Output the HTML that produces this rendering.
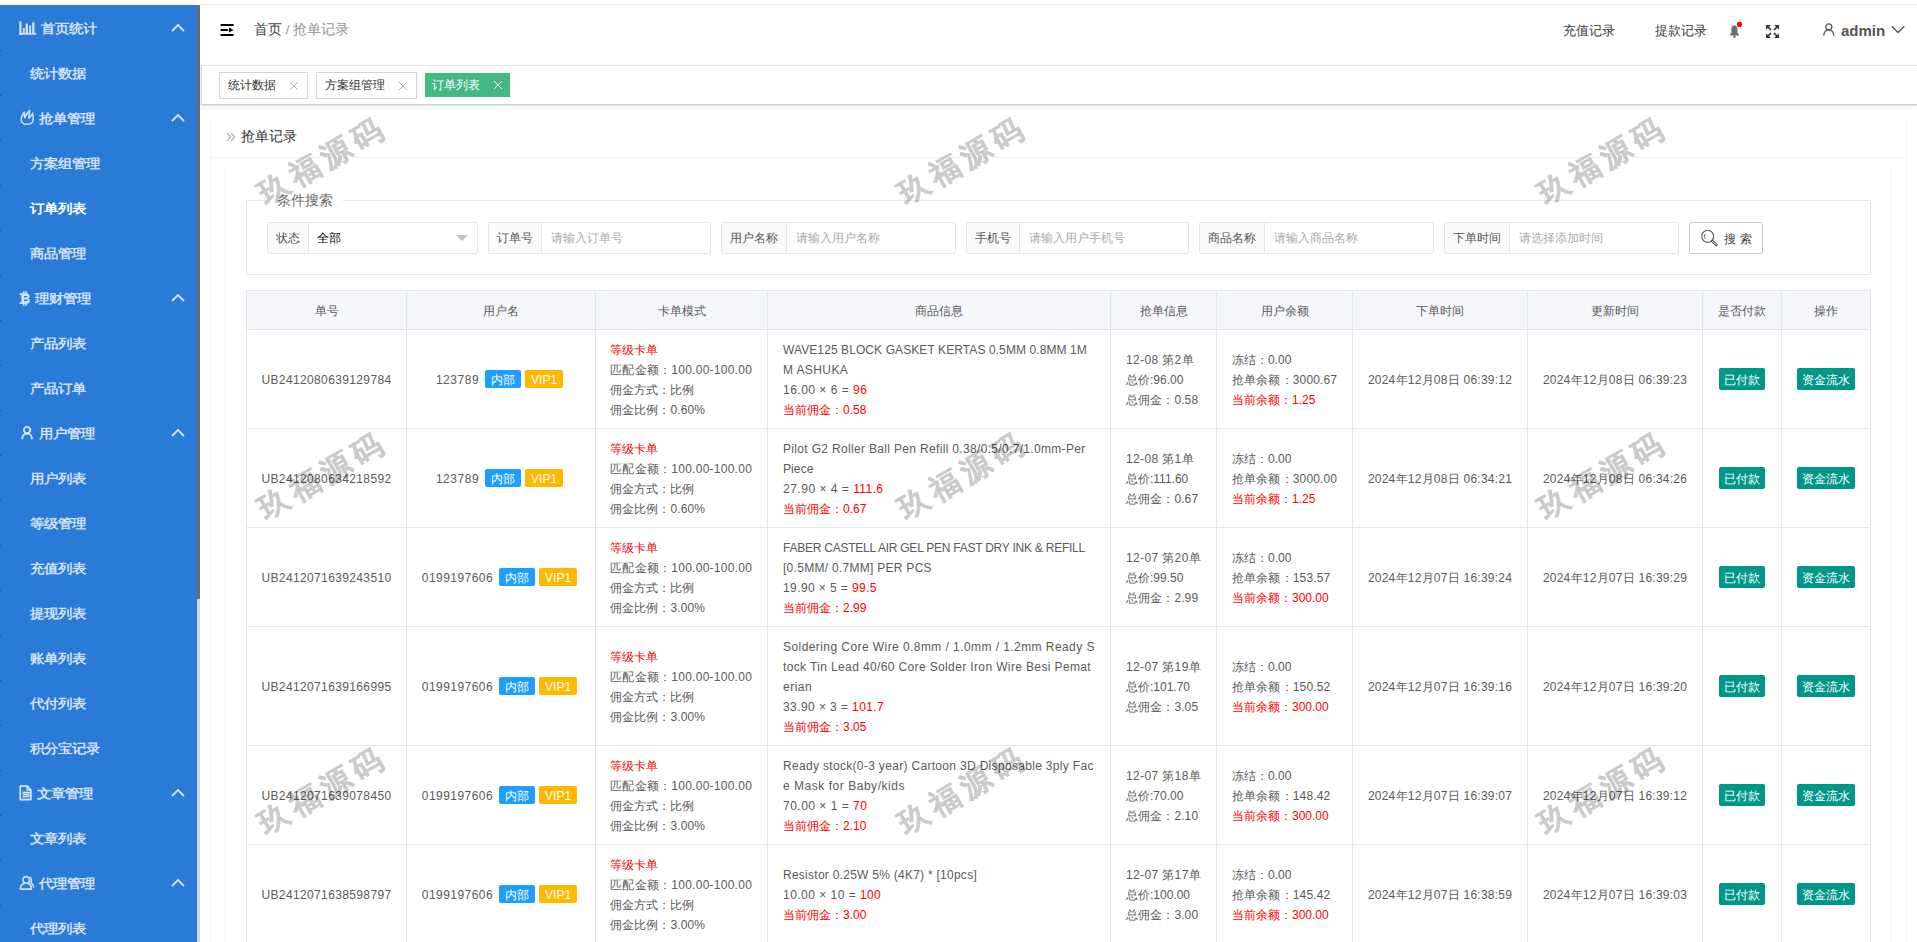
<!DOCTYPE html>
<html><head><meta charset="utf-8"><style>
*{box-sizing:border-box;margin:0;padding:0}
html,body{width:1917px;height:942px;overflow:hidden;background:#fff;font-family:"Liberation Sans",sans-serif;font-size:12px;color:#666}
.a{position:absolute}
#side{position:absolute;left:0;top:5px;width:197px;height:937px;background:#2a7ad8;overflow:hidden}
.it{position:absolute;left:0;width:197px;height:45px;font-size:14px;font-weight:bold;color:rgba(255,255,255,.78);white-space:nowrap}
.it .tx{position:absolute;top:1px;line-height:45px;transform:scaleY(.9);transform-origin:0 50%}
.hd .tx{left:39px}
.sub .tx{left:30px}
.act{color:#fff}
.it svg{position:absolute}
#sb1{position:absolute;left:197px;top:5px;width:3px;height:594px;background:#6b6b6b}
#sb2{position:absolute;left:197px;top:599px;width:3px;height:343px;background:#d6d6d6}
#hdr{position:absolute;left:200px;top:4px;width:1717px;height:61px;border-top:1px solid #e6e6e6;box-shadow:0 1px 3px rgba(0,0,0,.03)}
#hdr .t{position:absolute;top:0;line-height:52px;font-size:14px;white-space:nowrap}
#tabs{position:absolute;left:201px;top:65px;width:1716px;height:39px;background:#fff;border-top:1px solid #e2e2e2;border-left:1px solid #dcdcdc;box-shadow:0 1px 1.5px rgba(0,0,0,.22),0 3px 6px rgba(0,0,0,.06)}
.tab{position:absolute;top:6px;height:27px;border:1px solid #d2d2d2;background:#fff;color:#333;font-size:12px;line-height:25px;white-space:nowrap}
.tab .tt{position:absolute;left:8px;top:0}
.tab svg{position:absolute}
#cont{display:none}
#card{position:absolute;left:210px;top:115px;width:1697px;height:840px;border:1px solid #f6f6f6;border-top-color:#fcfcfc;background:#fff}
#ctitle{position:absolute;left:211px;top:116px;width:1695px;height:42px;border-bottom:1px solid #f2f2f2}
#body2{position:absolute;left:225px;top:168px;width:1667px;height:800px;border:1px solid #f4f4f4;border-top-color:#fdfdfd;border-bottom:0}
#fs{position:absolute;left:246px;top:200px;width:1625px;height:75px;border:1px solid #e6e6e6}
#legend{position:absolute;left:267px;top:191px;padding:0 10px;background:#fff;font-size:14px;line-height:18px;color:#666;white-space:nowrap}
.grp{position:absolute;top:222px;height:32px;border:1px solid #e6e6e6;border-radius:2px;background:#fff}
.grp .lb{position:absolute;left:0;top:0;height:30px;background:#fafafa;border-right:1px solid #e6e6e6;line-height:30px;color:#555;font-size:12px;text-align:center;white-space:nowrap}
.grp .ph{position:absolute;top:0;line-height:30px;color:#aaa;font-size:12px;white-space:nowrap}
#btn{position:absolute;left:1689px;top:222px;width:74px;height:32px;border:1px solid #c9c9c9;border-radius:2px;background:#fff}
table{position:absolute;left:246px;top:290px;border-collapse:collapse;table-layout:fixed;width:1625px}
td,th{border:1px solid #e2e7ee;font-weight:normal;color:#5a5a5a;font-size:12px;line-height:20px;white-space:nowrap;overflow:hidden}
th{background:#f5f7fa;height:39px;text-align:center;padding:2px 0 0 0}
td{text-align:center;vertical-align:middle;padding:2px 0 0 0}
td .bl{display:inline-block;text-align:left}
td.l{text-align:left;padding-left:15px}
.r{color:#f00}
.bd{display:inline-block;height:18px;line-height:20px;overflow:hidden;padding:0 6px;color:#fff;border-radius:2px;vertical-align:middle;font-size:12px;position:relative;top:-2px}
.bb{background:#1e9fff}.bo{background:#ffb800}
.gb{display:inline-block;height:22px;line-height:24px;overflow:hidden;vertical-align:middle;padding:0 5px;color:#fff;background:#009688;border-radius:2px;font-size:12px;position:relative;top:-1px}
.wm{position:absolute;font-size:30px;font-weight:bold;color:#000;opacity:.2;-webkit-text-stroke:.35px #000;transform:rotate(-30deg);white-space:nowrap;letter-spacing:6px;pointer-events:none}
</style></head><body>
<div id="side">
<div class="it hd" style="top:0px"><svg style="left:19px;top:16px" width="18" height="14" viewBox="0 0 18 14"><g fill="rgba(255,255,255,.78)"><rect x="0.3" y="0.2" width="2.2" height="13.6"/><rect x="0.3" y="11.9" width="16.8" height="1.8"/><rect x="3.9" y="7" width="1.8" height="5"/><rect x="6.6" y="2.6" width="2.4" height="9.4"/><rect x="10.2" y="4.5" width="1.9" height="7.5"/><rect x="13.2" y="1.3" width="2.3" height="10.7"/></g></svg><span class="tx" style="left:41px">首页统计</span><svg style="left:171px;top:18px" width="14" height="9" viewBox="0 0 14 9"><path d="M1 8 L7 2 L13 8" fill="none" stroke="rgba(255,255,255,.8)" stroke-width="1.8"/></svg></div>
<div class="it sub" style="top:45px"><span class="tx">统计数据</span></div>
<div class="it hd" style="top:90px"><svg style="left:20px;top:14px" width="15" height="17" viewBox="0 0 15 17"><path d="M6.7 15.3 C3.4 15.3 1.2 13 1.2 10.2 C1.2 7.3 3 5.4 4.2 3.2 C4.3 5.5 4.5 7.4 5 8.8 C5.6 5.6 7.5 3.2 9.7 1.3 C9.2 4 8.8 7 9 9.3 C10 8 11.6 6.2 12.6 4.3 C13.4 7.6 13.8 11.8 11.9 13.8 C10.9 14.9 9 15.3 6.7 15.3 Z" fill="none" stroke="rgba(255,255,255,.78)" stroke-width="1.6" stroke-linejoin="round"/></svg><span class="tx" style="left:39px">抢单管理</span><svg style="left:171px;top:18px" width="14" height="9" viewBox="0 0 14 9"><path d="M1 8 L7 2 L13 8" fill="none" stroke="rgba(255,255,255,.8)" stroke-width="1.8"/></svg></div>
<div class="it sub" style="top:135px"><span class="tx">方案组管理</span></div>
<div class="it sub act" style="top:180px"><span class="tx">订单列表</span></div>
<div class="it sub" style="top:225px"><span class="tx">商品管理</span></div>
<div class="it hd" style="top:270px"><svg style="left:19px;top:16px" width="12" height="15" viewBox="0 0 12 15"><path fill-rule="evenodd" fill="rgba(255,255,255,.78)" d="M3.8 0.2h1.8v2h0.8v-2h1.8v2.3 C9.9 2.9 10.6 3.9 10.6 5.2 C10.6 6.2 10.1 7 9.3 7.4 C10.3 7.9 10.9 8.8 10.9 10 C10.9 11.6 9.8 12.6 8.2 12.8 V14.7 H6.4 V12.9 H5.6 V14.7 H3.8 V12.9 H0.7 V11.3 H2.3 V3.9 H0.7 V2.3 H3.8 Z M5 5 V6.3 H7.8 C8.3 6.3 8.5 6 8.5 5.6 C8.5 5.2 8.3 5 7.8 5 Z M5 8.6 V10 H8 C8.5 10 8.8 9.7 8.8 9.3 C8.8 8.9 8.5 8.6 8 8.6 Z"/></svg><span class="tx" style="left:35px">理财管理</span><svg style="left:171px;top:18px" width="14" height="9" viewBox="0 0 14 9"><path d="M1 8 L7 2 L13 8" fill="none" stroke="rgba(255,255,255,.8)" stroke-width="1.8"/></svg></div>
<div class="it sub" style="top:315px"><span class="tx">产品列表</span></div>
<div class="it sub" style="top:360px"><span class="tx">产品订单</span></div>
<div class="it hd" style="top:405px"><svg style="left:20px;top:15px" width="14" height="15" viewBox="0 0 14 15"><circle cx="7.1" cy="5.1" r="3.2" fill="none" stroke="rgba(255,255,255,.78)" stroke-width="1.9"/><path d="M2.2 14.2 C2.2 10.8 4.3 8.6 7.1 8.6 C9.9 8.6 12 10.8 12 14.2" fill="none" stroke="rgba(255,255,255,.78)" stroke-width="1.9"/></svg><span class="tx" style="left:39px">用户管理</span><svg style="left:171px;top:18px" width="14" height="9" viewBox="0 0 14 9"><path d="M1 8 L7 2 L13 8" fill="none" stroke="rgba(255,255,255,.8)" stroke-width="1.8"/></svg></div>
<div class="it sub" style="top:450px"><span class="tx">用户列表</span></div>
<div class="it sub" style="top:495px"><span class="tx">等级管理</span></div>
<div class="it sub" style="top:540px"><span class="tx">充值列表</span></div>
<div class="it sub" style="top:585px"><span class="tx">提现列表</span></div>
<div class="it sub" style="top:630px"><span class="tx">账单列表</span></div>
<div class="it sub" style="top:675px"><span class="tx">代付列表</span></div>
<div class="it sub" style="top:720px"><span class="tx">积分宝记录</span></div>
<div class="it hd" style="top:765px"><svg style="left:19px;top:15px" width="14" height="16" viewBox="0 0 14 16"><path d="M1.2 1.2 H8.4 L11.9 4.8 V14.6 H1.2 Z" fill="none" stroke="rgba(255,255,255,.78)" stroke-width="1.7" stroke-linejoin="round"/><path d="M8.2 1.4 V5 H11.8" fill="none" stroke="rgba(255,255,255,.78)" stroke-width="1.4"/><rect x="3" y="6" width="7.5" height="7.5" fill="rgba(255,255,255,.25)"/><path d="M4 7.5 H10.7 M4 9.4 H10.7 M4 11.4 H10.7" stroke="rgba(255,255,255,.78)" stroke-width="1.2"/></svg><span class="tx" style="left:37px">文章管理</span><svg style="left:171px;top:18px" width="14" height="9" viewBox="0 0 14 9"><path d="M1 8 L7 2 L13 8" fill="none" stroke="rgba(255,255,255,.8)" stroke-width="1.8"/></svg></div>
<div class="it sub" style="top:810px"><span class="tx">文章列表</span></div>
<div class="it hd" style="top:855px"><svg style="left:19px;top:15px" width="16" height="16" viewBox="0 0 16 16"><circle cx="7.2" cy="4.9" r="3.3" fill="none" stroke="rgba(255,255,255,.78)" stroke-width="1.7"/><path d="M5.4 8.3 C3 9 1.4 11 1.4 14.1 H12.4 C12.4 11 10.9 9 8.9 8.3" fill="none" stroke="rgba(255,255,255,.78)" stroke-width="1.7" stroke-linejoin="round"/><path d="M10.3 1.9 C12.6 2.4 13.4 5.4 11.7 7.6 C13.6 8.6 14.6 10.6 14.6 12.8" fill="none" stroke="rgba(255,255,255,.78)" stroke-width="1.4"/></svg><span class="tx" style="left:39px">代理管理</span><svg style="left:171px;top:18px" width="14" height="9" viewBox="0 0 14 9"><path d="M1 8 L7 2 L13 8" fill="none" stroke="rgba(255,255,255,.8)" stroke-width="1.8"/></svg></div>
<div class="it sub" style="top:900px"><span class="tx">代理列表</span></div>
</div>
<div class="a" style="left:0;top:50px;width:1px;height:1px;background:#2d4a6e"></div>
<div class="a" style="left:0;top:95px;width:1px;height:1px;background:#2d4a6e"></div>
<div class="a" style="left:0;top:140px;width:1px;height:1px;background:#2d4a6e"></div>
<div class="a" style="left:0;top:185px;width:1px;height:1px;background:#2d4a6e"></div>
<div class="a" style="left:0;top:230px;width:1px;height:1px;background:#2d4a6e"></div>
<div class="a" style="left:0;top:275px;width:1px;height:1px;background:#2d4a6e"></div>
<div class="a" style="left:0;top:320px;width:1px;height:1px;background:#2d4a6e"></div>
<div class="a" style="left:0;top:365px;width:1px;height:1px;background:#2d4a6e"></div>
<div class="a" style="left:0;top:410px;width:1px;height:1px;background:#2d4a6e"></div>
<div class="a" style="left:0;top:455px;width:1px;height:1px;background:#2d4a6e"></div>
<div class="a" style="left:0;top:500px;width:1px;height:1px;background:#2d4a6e"></div>
<div class="a" style="left:0;top:545px;width:1px;height:1px;background:#2d4a6e"></div>
<div class="a" style="left:0;top:590px;width:1px;height:1px;background:#2d4a6e"></div>
<div class="a" style="left:0;top:635px;width:1px;height:1px;background:#2d4a6e"></div>
<div class="a" style="left:0;top:680px;width:1px;height:1px;background:#2d4a6e"></div>
<div class="a" style="left:0;top:725px;width:1px;height:1px;background:#2d4a6e"></div>
<div class="a" style="left:0;top:770px;width:1px;height:1px;background:#2d4a6e"></div>
<div class="a" style="left:0;top:815px;width:1px;height:1px;background:#2d4a6e"></div>
<div class="a" style="left:0;top:860px;width:1px;height:1px;background:#2d4a6e"></div>
<div class="a" style="left:0;top:905px;width:1px;height:1px;background:#2d4a6e"></div>
<div id="sb1"></div><div id="sb2"></div>
<div id="hdr"><svg class="a" style="left:20px;top:18px" width="15" height="14" viewBox="0 0 15 14"><g fill="#000"><rect x="0.3" y="1" width="13.6" height="2.1" rx="1"/><rect x="0.3" y="6" width="8" height="2.1" rx="1"/><rect x="0.3" y="11" width="13.6" height="2.1" rx="1"/><path d="M9 4.5 L13.6 7 L9 9.5 Z"/></g></svg><div class="t" style="left:54px;top:-1px;color:#444;font-size:13.5px">首页 <span style="color:#929292">/ 抢单记录</span></div><div class="t" style="left:1363px;top:0px;color:#3a3a3a;font-size:13px">充值记录</div><div class="t" style="left:1455px;top:0px;color:#3a3a3a;font-size:13px">提款记录</div><svg class="a" style="left:1528px;top:16px" width="16" height="18" viewBox="0 0 16 18"><path d="M6.4 4.4 C4.1 4.4 3.3 6.5 3.3 8.6 V11.6 L1.6 14.6 H11.2 L9.5 11.6 V8.6 C9.5 6.5 8.7 4.4 6.4 4.4 Z" fill="#6e6e6e"/><circle cx="6.4" cy="15.6" r="1.3" fill="#6e6e6e"/><circle cx="11.5" cy="3.4" r="2.6" fill="#f00"/></svg><svg class="a" style="left:1566px;top:20px" width="13" height="13" viewBox="0 0 13 13"><g fill="#333"><path d="M0 0H4.8L0 4.8Z M13 0H8.2L13 4.8Z M0 13V8.2L4.8 13Z M13 13H8.2L13 8.2Z"/></g><path d="M1.5 1.5L5 5M11.5 1.5L8 5M1.5 11.5L5 8M11.5 11.5L8 8" stroke="#333" stroke-width="1.7"/></svg><svg class="a" style="left:1623px;top:18px" width="12" height="13" viewBox="0 0 12 13"><circle cx="5.8" cy="3.8" r="3" fill="none" stroke="#555" stroke-width="1.3"/><path d="M0.7 12.6 C0.9 9 3 7.2 5.8 7.2 C8.6 7.2 10.7 9 10.9 12.6" fill="none" stroke="#555" stroke-width="1.3"/></svg><div class="t" style="left:1641px;top:0px;color:#555;font-size:15px;font-weight:bold">admin</div><svg class="a" style="left:1691px;top:20px" width="14" height="9" viewBox="0 0 14 9"><path d="M0.8 1.2 L7 7.6 L13.2 1.2" fill="none" stroke="#555" stroke-width="1.4"/></svg></div>
<div id="tabs"><div class="tab" style="left:17px;width:89px"><span class="tt">统计数据</span><svg style="left:69px;top:8px" width="10" height="10" viewBox="0 0 10 10"><path d="M1 1L9 9M9 1L1 9" stroke="#b4b4b4" stroke-width="1"/></svg></div><div class="tab" style="left:114px;width:101px"><span class="tt">方案组管理</span><svg style="left:81px;top:8px" width="10" height="10" viewBox="0 0 10 10"><path d="M1 1L9 9M9 1L1 9" stroke="#b4b4b4" stroke-width="1"/></svg></div><div class="tab" style="left:223px;top:7px;width:85px;height:24px;border:0;background:#42b883;color:#fff;line-height:24px"><span class="tt" style="left:7px">订单列表</span><svg style="left:68px;top:7px" width="10" height="10" viewBox="0 0 10 10"><path d="M1 1L9 9M9 1L1 9" stroke="#fff" stroke-width="1"/></svg></div></div>
<div id="cont"></div>
<div id="card"></div>
<div id="ctitle"><svg class="a" style="left:15px;top:16px" width="10" height="10" viewBox="0 0 10 10"><path d="M1 1L4.5 5L1 9M5 1L8.5 5L5 9" fill="none" stroke="#999" stroke-width="1.1"/></svg><div class="a" style="left:30px;top:0;line-height:40px;font-size:14px;color:#333">抢单记录</div></div>
<div id="body2"></div>
<div id="fs"></div><div id="legend">条件搜索</div><div class="grp" style="left:267px;width:211px"><div class="lb" style="width:41px">状态</div><div class="ph" style="left:49px;color:#000">全部</div><svg class="a" style="left:188px;top:12px" width="12" height="7" viewBox="0 0 12 7"><path d="M0 0H12L6 6Z" fill="#c2c2c2"/></svg></div><div class="grp" style="left:488px;width:223px"><div class="lb" style="width:53px">订单号</div><div class="ph" style="left:62px">请输入订单号</div></div><div class="grp" style="left:721px;width:235px"><div class="lb" style="width:65px">用户名称</div><div class="ph" style="left:74px">请输入用户名称</div></div><div class="grp" style="left:966px;width:223px"><div class="lb" style="width:53px">手机号</div><div class="ph" style="left:62px">请输入用户手机号</div></div><div class="grp" style="left:1199px;width:235px"><div class="lb" style="width:65px">商品名称</div><div class="ph" style="left:74px">请输入商品名称</div></div><div class="grp" style="left:1444px;width:235px"><div class="lb" style="width:65px">下单时间</div><div class="ph" style="left:74px">请选择添加时间</div></div><div id="btn"><svg class="a" style="left:11px;top:7px" width="18" height="18" viewBox="0 0 18 18"><circle cx="6.7" cy="6.3" r="6" fill="none" stroke="#555" stroke-width="1.1"/><path d="M11.3 11 L15.3 15" stroke="#555" stroke-width="2.6" stroke-linecap="round"/><path d="M11.3 11 L15.3 15" stroke="#fff" stroke-width="0.9"/><path d="M4.4 3.9 A3.2 3.2 0 0 0 4.4 8.7" fill="none" stroke="#555" stroke-width="1"/></svg><div class="a" style="left:34px;top:1px;line-height:30px;color:#444;letter-spacing:4px">搜索</div></div>
<table><colgroup><col style="width:160px"><col style="width:189px"><col style="width:172px"><col style="width:343px"><col style="width:106px"><col style="width:136px"><col style="width:175px"><col style="width:175px"><col style="width:79px"><col style="width:89px"></colgroup><tr><th>单号</th><th>用户名</th><th>卡单模式</th><th>商品信息</th><th>抢单信息</th><th>用户余额</th><th>下单时间</th><th>更新时间</th><th>是否付款</th><th>操作</th></tr><tr style="height:99px"><td><span style="letter-spacing:0.37px">UB2412080639129784</span></td><td><span style="letter-spacing:0.53px">123789</span><span class="bd bb" style="margin-left:6px">内部</span><span class="bd bo" style="margin-left:4px;margin-right:3px">VIP1</span></td><td class="l" style="padding-left:14px"><span class="r">等级卡单</span><br><span style="letter-spacing:0.26px">匹配金额：100.00-100.00</span><br>佣金方式：比例<br><span style="letter-spacing:0.1px">佣金比例：0.60%</span></td><td class="l" style="padding-left:15px"><span style="letter-spacing:0.09px">WAVE125 BLOCK GASKET KERTAS 0.5MM 0.8MM 1M</span><br><span style="letter-spacing:0.4px">M ASHUKA</span><br><span style="letter-spacing:0.5px">16.00 × 6 = </span><span class="r" style="letter-spacing:.4px">96</span><br><span class="r">当前佣金：0.58</span></td><td class="l" style="padding-left:15px"><span style="letter-spacing:0.37px">12-08 第2单</span><br>总价:96.00<br><span style="letter-spacing:0.1px">总佣金：0.58</span></td><td class="l" style="padding-left:15px">冻结：0.00<br><span style="letter-spacing:0.15px">抢单余额：3000.67</span><br><span class="r">当前余额：1.25</span></td><td><span style="letter-spacing:0.24px">2024年12月08日 06:39:12</span></td><td><span style="letter-spacing:0.24px">2024年12月08日 06:39:23</span></td><td><span class="gb">已付款</span></td><td><span class="gb">资金流水</span></td></tr><tr style="height:99px"><td><span style="letter-spacing:0.37px">UB2412080634218592</span></td><td><span style="letter-spacing:0.53px">123789</span><span class="bd bb" style="margin-left:6px">内部</span><span class="bd bo" style="margin-left:4px;margin-right:3px">VIP1</span></td><td class="l" style="padding-left:14px"><span class="r">等级卡单</span><br><span style="letter-spacing:0.26px">匹配金额：100.00-100.00</span><br>佣金方式：比例<br><span style="letter-spacing:0.1px">佣金比例：0.60%</span></td><td class="l" style="padding-left:15px"><span style="letter-spacing:0.33px">Pilot G2 Roller Ball Pen Refill 0.38/0.5/0.7/1.0mm-Per</span><br><span style="letter-spacing:0.1px">Piece</span><br><span style="letter-spacing:0.51px">27.90 × 4 = </span><span class="r" style="letter-spacing:.4px">111.6</span><br><span class="r">当前佣金：0.67</span></td><td class="l" style="padding-left:15px"><span style="letter-spacing:0.37px">12-08 第1单</span><br>总价:111.60<br><span style="letter-spacing:0.1px">总佣金：0.67</span></td><td class="l" style="padding-left:15px">冻结：0.00<br><span style="letter-spacing:0.15px">抢单余额：3000.00</span><br><span class="r">当前余额：1.25</span></td><td><span style="letter-spacing:0.24px">2024年12月08日 06:34:21</span></td><td><span style="letter-spacing:0.24px">2024年12月08日 06:34:26</span></td><td><span class="gb">已付款</span></td><td><span class="gb">资金流水</span></td></tr><tr style="height:99px"><td><span style="letter-spacing:0.37px">UB2412071639243510</span></td><td><span style="letter-spacing:0.45px">0199197606</span><span class="bd bb" style="margin-left:6px">内部</span><span class="bd bo" style="margin-left:4px;margin-right:3px">VIP1</span></td><td class="l" style="padding-left:14px"><span class="r">等级卡单</span><br><span style="letter-spacing:0.26px">匹配金额：100.00-100.00</span><br>佣金方式：比例<br><span style="letter-spacing:0.1px">佣金比例：3.00%</span></td><td class="l" style="padding-left:15px"><span style="letter-spacing:-0.24px">FABER CASTELL AIR GEL PEN FAST DRY INK &amp; REFILL</span><br><span style="letter-spacing:0.28px">[0.5MM/ 0.7MM] PER PCS</span><br><span style="letter-spacing:0.41px">19.90 × 5 = </span><span class="r" style="letter-spacing:.4px">99.5</span><br><span class="r">当前佣金：2.99</span></td><td class="l" style="padding-left:15px"><span style="letter-spacing:0.37px">12-07 第20单</span><br>总价:99.50<br><span style="letter-spacing:0.1px">总佣金：2.99</span></td><td class="l" style="padding-left:15px">冻结：0.00<br><span style="letter-spacing:0.15px">抢单余额：153.57</span><br><span class="r">当前余额：300.00</span></td><td><span style="letter-spacing:0.24px">2024年12月07日 16:39:24</span></td><td><span style="letter-spacing:0.24px">2024年12月07日 16:39:29</span></td><td><span class="gb">已付款</span></td><td><span class="gb">资金流水</span></td></tr><tr style="height:119px"><td><span style="letter-spacing:0.37px">UB2412071639166995</span></td><td><span style="letter-spacing:0.45px">0199197606</span><span class="bd bb" style="margin-left:6px">内部</span><span class="bd bo" style="margin-left:4px;margin-right:3px">VIP1</span></td><td class="l" style="padding-left:14px"><span class="r">等级卡单</span><br><span style="letter-spacing:0.26px">匹配金额：100.00-100.00</span><br>佣金方式：比例<br><span style="letter-spacing:0.1px">佣金比例：3.00%</span></td><td class="l" style="padding-left:15px"><span style="letter-spacing:0.43px">Soldering Core Wire 0.8mm / 1.0mm / 1.2mm Ready S</span><br><span style="letter-spacing:0.37px">tock Tin Lead 40/60 Core Solder Iron Wire Besi Pemat</span><br><span style="letter-spacing:0.5px">erian</span><br><span style="letter-spacing:0.42px">33.90 × 3 = </span><span class="r" style="letter-spacing:.4px">101.7</span><br><span class="r">当前佣金：3.05</span></td><td class="l" style="padding-left:15px"><span style="letter-spacing:0.37px">12-07 第19单</span><br>总价:101.70<br><span style="letter-spacing:0.1px">总佣金：3.05</span></td><td class="l" style="padding-left:15px">冻结：0.00<br><span style="letter-spacing:0.15px">抢单余额：150.52</span><br><span class="r">当前余额：300.00</span></td><td><span style="letter-spacing:0.24px">2024年12月07日 16:39:16</span></td><td><span style="letter-spacing:0.24px">2024年12月07日 16:39:20</span></td><td><span class="gb">已付款</span></td><td><span class="gb">资金流水</span></td></tr><tr style="height:99px"><td><span style="letter-spacing:0.37px">UB2412071639078450</span></td><td><span style="letter-spacing:0.45px">0199197606</span><span class="bd bb" style="margin-left:6px">内部</span><span class="bd bo" style="margin-left:4px;margin-right:3px">VIP1</span></td><td class="l" style="padding-left:14px"><span class="r">等级卡单</span><br><span style="letter-spacing:0.26px">匹配金额：100.00-100.00</span><br>佣金方式：比例<br><span style="letter-spacing:0.1px">佣金比例：3.00%</span></td><td class="l" style="padding-left:15px"><span style="letter-spacing:0.32px">Ready stock(0-3 year) Cartoon 3D Disposable 3ply Fac</span><br><span style="letter-spacing:0.53px">e Mask for Baby/kids</span><br><span style="letter-spacing:0.5px">70.00 × 1 = </span><span class="r" style="letter-spacing:.4px">70</span><br><span class="r">当前佣金：2.10</span></td><td class="l" style="padding-left:15px"><span style="letter-spacing:0.37px">12-07 第18单</span><br>总价:70.00<br><span style="letter-spacing:0.1px">总佣金：2.10</span></td><td class="l" style="padding-left:15px">冻结：0.00<br><span style="letter-spacing:0.15px">抢单余额：148.42</span><br><span class="r">当前余额：300.00</span></td><td><span style="letter-spacing:0.24px">2024年12月07日 16:39:07</span></td><td><span style="letter-spacing:0.24px">2024年12月07日 16:39:12</span></td><td><span class="gb">已付款</span></td><td><span class="gb">资金流水</span></td></tr><tr style="height:99px"><td><span style="letter-spacing:0.37px">UB2412071638598797</span></td><td><span style="letter-spacing:0.45px">0199197606</span><span class="bd bb" style="margin-left:6px">内部</span><span class="bd bo" style="margin-left:4px;margin-right:3px">VIP1</span></td><td class="l" style="padding-left:14px"><span class="r">等级卡单</span><br><span style="letter-spacing:0.26px">匹配金额：100.00-100.00</span><br>佣金方式：比例<br><span style="letter-spacing:0.1px">佣金比例：3.00%</span></td><td class="l" style="padding-left:15px"><span style="letter-spacing:0.26px">Resistor 0.25W 5% (4K7) * [10pcs]</span><br><span style="letter-spacing:0.48px">10.00 × 10 = </span><span class="r" style="letter-spacing:.4px">100</span><br><span class="r">当前佣金：3.00</span></td><td class="l" style="padding-left:15px"><span style="letter-spacing:0.37px">12-07 第17单</span><br>总价:100.00<br><span style="letter-spacing:0.1px">总佣金：3.00</span></td><td class="l" style="padding-left:15px">冻结：0.00<br><span style="letter-spacing:0.15px">抢单余额：145.42</span><br><span class="r">当前余额：300.00</span></td><td><span style="letter-spacing:0.24px">2024年12月07日 16:38:59</span></td><td><span style="letter-spacing:0.24px">2024年12月07日 16:39:03</span></td><td><span class="gb">已付款</span></td><td><span class="gb">资金流水</span></td></tr></table>
<div class="wm" style="left:243px;top:140px;width:160px;height:40px;line-height:40px;text-align:center">玖福源码</div><div class="wm" style="left:883px;top:140px;width:160px;height:40px;line-height:40px;text-align:center">玖福源码</div><div class="wm" style="left:1523px;top:140px;width:160px;height:40px;line-height:40px;text-align:center">玖福源码</div><div class="wm" style="left:243px;top:455px;width:160px;height:40px;line-height:40px;text-align:center">玖福源码</div><div class="wm" style="left:883px;top:455px;width:160px;height:40px;line-height:40px;text-align:center">玖福源码</div><div class="wm" style="left:1523px;top:455px;width:160px;height:40px;line-height:40px;text-align:center">玖福源码</div><div class="wm" style="left:243px;top:770px;width:160px;height:40px;line-height:40px;text-align:center">玖福源码</div><div class="wm" style="left:883px;top:770px;width:160px;height:40px;line-height:40px;text-align:center">玖福源码</div><div class="wm" style="left:1523px;top:770px;width:160px;height:40px;line-height:40px;text-align:center">玖福源码</div>
</body></html>
